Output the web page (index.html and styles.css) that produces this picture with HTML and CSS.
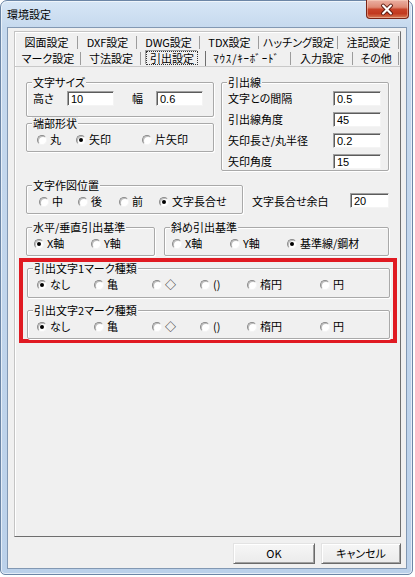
FILE: index.html
```html
<!DOCTYPE html>
<html lang="ja">
<head>
<meta charset="utf-8">
<title>環境設定</title>
<link rel="stylesheet" href="styles.css">
</head>
<body>
<div class="window">
  <div class="titlebar">
    <span class="title">環境設定</span>
    <span class="close">
      <svg width="43" height="19" viewBox="0 0 43 19">
        <path d="M17.5 5.5 L25.5 13.5 M25.5 5.5 L17.5 13.5" stroke="#5a1a10" stroke-width="4.2" stroke-linecap="round" fill="none"/>
        <path d="M17.5 5.5 L25.5 13.5 M25.5 5.5 L17.5 13.5" stroke="#ffffff" stroke-width="2.2" stroke-linecap="round" fill="none"/>
      </svg>
    </span>
  </div>
  <div class="client">
    <div class="tabctl">
      <div class="tabrow row1">
        <span class="tab">図面設定</span>
        <span class="tab">DXF設定</span>
        <span class="tab">DWG設定</span>
        <span class="tab">TDX設定</span>
        <span class="tab">ハッチング設定</span>
        <span class="tab">注記設定</span>
      </div>
      <div class="tabrow row2">
        <span class="tab">マーク設定</span>
        <span class="tab">寸法設定</span>
        <span class="tab sel"><span class="focus">引出設定</span></span>
        <span class="tab hw">ﾏｳｽ/ｷｰﾎﾞｰﾄﾞ</span>
        <span class="tab">入力設定</span>
        <span class="tab">その他</span>
      </div>
      <div class="panel">
        <div class="row-top">
          <div class="col-left">
            <div class="group g-size">
              <div class="gtitle">文字サイズ</div>
              <div class="size-row">
                <span class="lbl-h">高さ</span><span class="input w47">10</span>
                <span class="lbl-w">幅</span><span class="input w47">0.6</span>
              </div>
            </div>
            <div class="group g-tanbu">
              <div class="gtitle">端部形状</div>
              <div class="radios r-tanbu">
                <span class="opt"><span class="radio"></span>丸</span>
                <span class="opt"><span class="radio on"></span>矢印</span>
                <span class="opt"><span class="radio"></span>片矢印</span>
              </div>
            </div>
          </div>
          <div class="group g-line">
            <div class="gtitle">引出線</div>
            <div class="line-grid">
              <span>文字との間隔</span><span class="input">0.5</span>
              <span>引出線角度</span><span class="input">45</span>
              <span>矢印長さ/丸半径</span><span class="input">0.2</span>
              <span>矢印角度</span><span class="input">15</span>
            </div>
          </div>
        </div>
        <div class="row-pos">
          <div class="group g-pos">
            <div class="gtitle">文字作図位置</div>
            <div class="radios r-pos">
              <span class="opt"><span class="radio"></span>中</span>
              <span class="opt"><span class="radio"></span>後</span>
              <span class="opt"><span class="radio"></span>前</span>
              <span class="opt"><span class="radio on"></span>文字長合せ</span>
            </div>
          </div>
          <span class="pos-label">文字長合せ余白</span>
          <span class="input w39">20</span>
        </div>
        <div class="row-base">
          <div class="group g-hv">
            <div class="gtitle">水平/垂直引出基準</div>
            <div class="radios r-hv">
              <span class="opt"><span class="radio on"></span>X軸</span>
              <span class="opt"><span class="radio"></span>Y軸</span>
            </div>
          </div>
          <div class="group g-diag">
            <div class="gtitle">斜め引出基準</div>
            <div class="radios r-diag">
              <span class="opt"><span class="radio"></span>X軸</span>
              <span class="opt"><span class="radio"></span>Y軸</span>
              <span class="opt"><span class="radio on"></span>基準線/鋼材</span>
            </div>
          </div>
        </div>
        <div class="highlight">
          <div class="group g-mark1">
            <div class="gtitle">引出文字1マーク種類</div>
            <div class="radios r-mark">
              <span class="opt"><span class="radio on"></span>なし</span>
              <span class="opt"><span class="radio"></span>亀</span>
              <span class="opt"><span class="radio"></span>◇</span>
              <span class="opt"><span class="radio"></span>()</span>
              <span class="opt"><span class="radio"></span>楕円</span>
              <span class="opt"><span class="radio"></span>円</span>
            </div>
          </div>
          <div class="group g-mark2">
            <div class="gtitle">引出文字2マーク種類</div>
            <div class="radios r-mark">
              <span class="opt"><span class="radio on"></span>なし</span>
              <span class="opt"><span class="radio"></span>亀</span>
              <span class="opt"><span class="radio"></span>◇</span>
              <span class="opt"><span class="radio"></span>()</span>
              <span class="opt"><span class="radio"></span>楕円</span>
              <span class="opt"><span class="radio"></span>円</span>
            </div>
          </div>
        </div>
      </div>
    </div>
    <div class="buttons">
      <button class="btn btn-ok">OK</button>
      <button class="btn btn-cancel">キャンセル</button>
    </div>
  </div>
</div>
</body>
</html>
```

FILE: styles.css
```css
* { box-sizing: border-box; }
html, body { margin: 0; padding: 0; background: #ffffff; }
body {
  font-family: "Noto Sans CJK JP", "Noto Sans", sans-serif;
  font-size: 11px;
  line-height: 13px;
  color: #000;
  font-feature-settings: "palt";
}

.window {
  width: 413px;
  height: 575px;
  border: 1px solid #6c86a6;
  border-radius: 7px 7px 5px 5px;
  background: linear-gradient(180deg, #d7e6f6 0px, #c6d9ee 26px, #bbd1ea 100%);
  box-shadow: inset 0 0 0 1px rgba(255,255,255,0.6);
  padding: 0 5px 5px 6px;
  display: flex;
  flex-direction: column;
}

.titlebar {
  height: 26px;
  display: flex;
  align-items: center;
  margin-right: -2px;
}
.title { font-size: 11px; line-height: 14px; color: #000; }
.close {
  margin-left: auto;
  align-self: flex-start;
  margin-top: -1px;
  width: 43px;
  height: 19px;
  border: 1px solid #7a2416;
  border-top: none;
  border-radius: 0 0 4px 4px;
  background: linear-gradient(180deg, #eab0a3 0%, #df8a75 40%, #c8432a 52%, #c2391f 75%, #d67a55 100%);
  box-shadow: inset 0 0 0 1px rgba(255,220,200,0.45);
  display: flex;
}
.close svg { display: block; margin-left: -1px; }

.client {
  height: 542px;
  border: 1px solid #8298b3;
  background: #f0f0f0;
  padding: 3px 5px 0 6px;
  display: flex;
  flex-direction: column;
}

.tabctl {
  height: 506px;
  border: 1px solid;
  border-color: #c4c4c4 #6e6e6e #6e6e6e #c4c4c4;
  box-shadow: inset 1px 1px 0 #ffffff;
  padding-top: 2px;
  display: flex;
  flex-direction: column;
}
.tabrow { display: grid; height: 16px; }
.row1 { grid-template-columns: 63px 59px 63px 59px 79px 61px; }
.row2 { grid-template-columns: 66px 60px 65px 85px 62px 46px; }
.tab {
  display: flex;
  align-items: center;
  justify-content: center;
  white-space: nowrap;
  background: linear-gradient(#9c9c9c, #9c9c9c) right 2px / 1px calc(100% - 3px) no-repeat;
}
.tab.hw { font-feature-settings: normal; letter-spacing: 0.8px; padding-right: 4px; }
.tab.sel { background: linear-gradient(#6e6e6e, #6e6e6e) right 1px / 1px calc(100% - 1px) no-repeat; padding-right: 3px; }
.focus {
  border: 1px dotted #333;
  padding: 0 3px;
  line-height: 12px;
  box-shadow: -1px -1px 0 #a0a0a0;
}

.panel {
  flex: 1;
  border-top: 1px solid #c9c9c9;
  padding: 15px 11px 0 11px;
}

.group {
  border: 1px solid #a9a9a9;
  border-radius: 2px;
  box-shadow: inset 1px 1px 0 #fff, 1px 1px 0 #fff;
  padding: 0 6px 5px;
}
.gtitle {
  margin: -7px 0 0 -1px;
  height: 13px;
  line-height: 13px;
  width: fit-content;
  padding: 0 1px;
  background: #f0f0f0;
  white-space: nowrap;
}

.input {
  display: block;
  height: 15px;
  background: #fff;
  border: 1px solid;
  border-color: #a0a0a0 #f4f4f4 #f4f4f4 #a0a0a0;
  box-shadow: inset 1px 1px 0 #5c5c5c;
  padding: 0 0 0 3px;
  line-height: 14px;
  font-family: "Liberation Sans", "Noto Sans CJK JP", sans-serif;
  font-size: 11px;
}
.w47 { width: 47px; }
.w39 { width: 39px; }

.row-top { display: flex; gap: 7px; }
.col-left { width: 188px; }
.g-size { padding-bottom: 10px; }
.size-row { display: flex; margin-top: 2px; align-items: center; }
.lbl-h { width: 34px; }
.lbl-w { width: 24px; margin-left: 18px; }
.g-tanbu { margin-top: 6px; }
.g-line { flex: 1; padding-bottom: 1px; }
.line-grid {
  display: grid;
  grid-template-columns: 105px 48px;
  grid-auto-rows: 15px;
  row-gap: 6px;
  align-items: center;
  margin-top: 2px;
}

.radios { display: grid; height: 13px; align-items: center; margin-top: 3px; }
.opt { display: flex; align-items: center; white-space: nowrap; }
.radio {
  position: relative;
  width: 10px;
  height: 10px;
  border-radius: 50%;
  border: 1px solid;
  border-color: #8a8a8a #f4f4f4 #f4f4f4 #8a8a8a;
  box-shadow: inset 1px 1px 0 #bdbdbd;
  background: #fff;
  margin-right: 3px;
  flex: none;
}
.radio.on::after {
  content: "";
  position: absolute;
  left: 2px;
  top: 2px;
  width: 4px;
  height: 4px;
  border-radius: 50%;
  background: #000;
}
.r-tanbu { padding-left: 4px; grid-template-columns: 39px 66px auto; }
.r-pos { padding-left: 6px; grid-template-columns: 39px 41px 40px auto; }
.r-hv { padding-left: 1px; grid-template-columns: 57px auto; }
.r-diag { padding-left: 1px; grid-template-columns: 58px 57px auto; }
.r-mark { padding-left: 3px; grid-template-columns: 57px 58px 48px 47px 73px auto; }

.row-pos { display: flex; align-items: flex-start; margin-top: 14px; }
.g-pos { width: 217px; }
.pos-label { margin: 10px 0 0 9px; white-space: nowrap; }
.row-pos .input { margin: 8px 0 0 auto; }

.row-base { display: flex; gap: 9px; margin-top: 13px; }
.g-hv { width: 129px; }
.g-diag { flex: 1; }

.highlight {
  margin: 2px -8px 0 -7px;
  border: 4px solid #e01a22;
  padding: 0 3px 0 4px;
}
.g-mark1 { margin-top: 6px; padding-bottom: 6px; }
.g-mark2 { margin-top: 12px; }

.buttons {
  display: flex;
  justify-content: flex-end;
  gap: 6px;
  margin-top: 6px;
}
.btn {
  height: 21px;
  padding: 0;
  font-family: "Noto Sans CJK JP", "Noto Sans", sans-serif;
  font-size: 11px;
  line-height: 13px;
  color: #000;
  background: linear-gradient(180deg, #f6f6f6, #ebebeb);
  border: 1px solid;
  border-color: #e3e3e3 #6a6a6a #6a6a6a #e3e3e3;
  box-shadow: inset 1px 1px 0 #fff, inset -1px -1px 0 #a0a0a0;
  font-feature-settings: "palt";
}
.btn-ok { width: 82px; }
.btn-cancel { width: 80px; }
```
